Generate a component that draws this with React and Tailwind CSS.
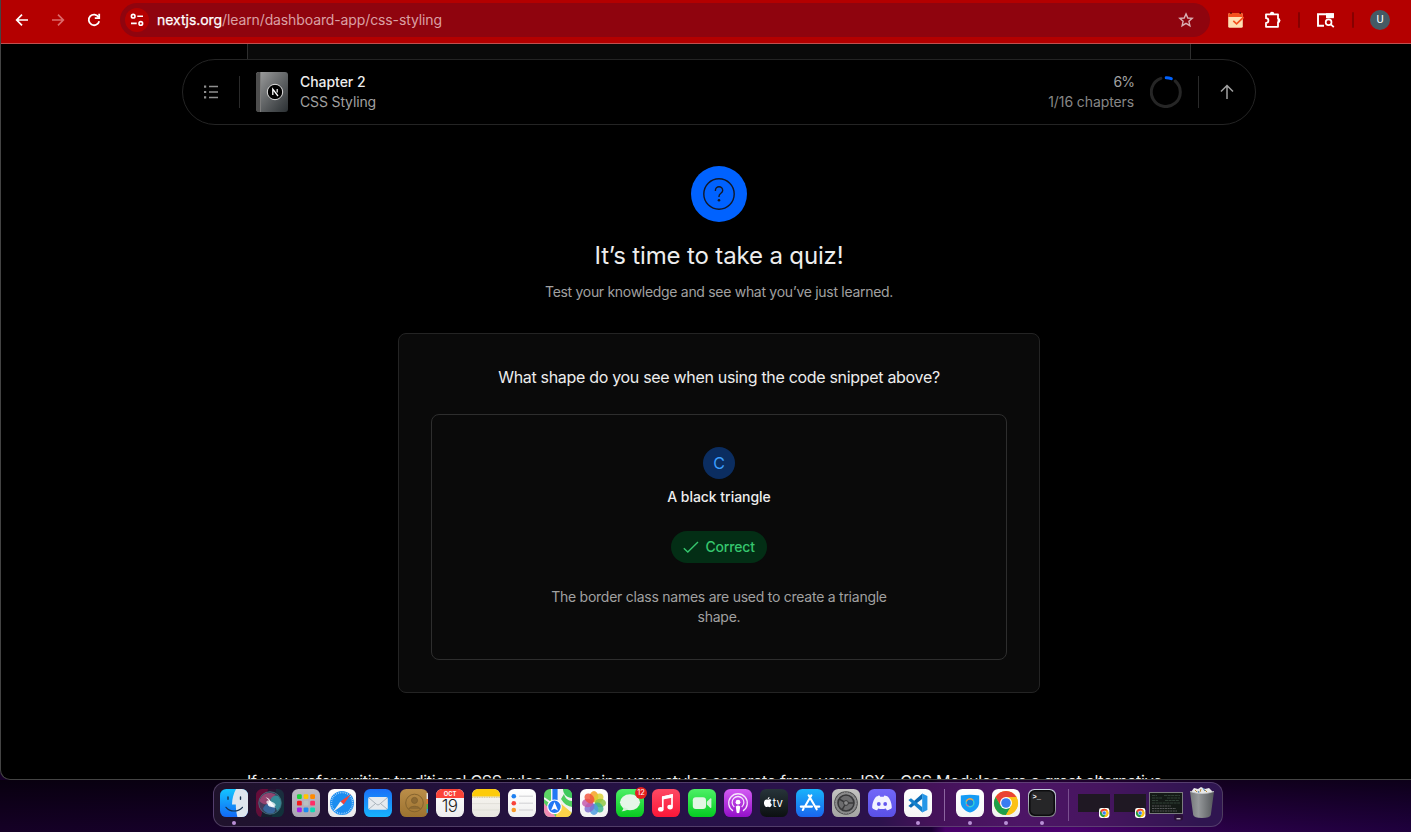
import React from "react";

/* ---------- Browser toolbar ---------- */

function ToolButton({ children, className = "" }) {
  return <button className={`flex h-8 w-9 items-center justify-center ${className}`}>{children}</button>;
}

function Toolbar() {
  return (
    <header className="flex h-[43px] shrink-0 items-start bg-[#b40000] pt-[3px] pl-[3px] text-white">
      <div className="flex h-[34px] items-center">
        <ToolButton>
          <svg width="14" height="14" viewBox="0 0 14 14" fill="none" stroke="currentColor" strokeWidth="1.7">
            <path d="M13 7H2M7 1.7L1.7 7L7 12.3" />
          </svg>
        </ToolButton>
        <ToolButton className="text-[#dc6a6a]">
          <svg width="14" height="14" viewBox="0 0 14 14" fill="none" stroke="currentColor" strokeWidth="1.7">
            <path d="M1 7H12M7 1.7L12.3 7L7 12.3" />
          </svg>
        </ToolButton>
        <ToolButton>
          <svg width="14" height="14" viewBox="0 0 14 14" fill="none" stroke="currentColor" strokeWidth="1.8">
            <path d="M11.6 4.2A5.3 5.3 0 1 0 12.2 8.2" />
            <path d="M12.2 0.8V5.2H7.8" />
          </svg>
        </ToolButton>
      </div>

      <div className="ml-[8px] flex h-[34px] w-[1090px] items-center rounded-full bg-[#8f040e] pr-[16px] pl-[5px]">
        <span className="flex size-6 items-center justify-center rounded-full bg-[#b40000]">
          <svg width="14" height="14" viewBox="0 0 14 14" fill="none" stroke="currentColor" strokeWidth="1.6">
            <circle cx="3.2" cy="3.2" r="1.8" />
            <path d="M7.3 3.2H13M1 10.4H6.7" />
            <circle cx="10.8" cy="10.4" r="1.8" />
          </svg>
        </span>
        <span className="ml-[8px] font-[Inter,sans-serif] text-[14px] leading-5 tracking-[-0.12px] whitespace-nowrap text-[#dba0a4]">
          <span className="tracking-[-0.05px] text-white [-webkit-text-stroke:0.25px_white]">nextjs.org</span>
          <span>/learn/dashboard-app/css-styling</span>
        </span>
        <svg className="ml-auto" width="16" height="16" viewBox="0 0 16 16" fill="none" stroke="#d9b0b4" strokeWidth="1.4">
          <path d="M8 1.9L9.8 6L14.2 6.4L10.9 9.3L11.9 13.7L8 11.4L4.1 13.7L5.1 9.3L1.8 6.4L6.2 6Z" />
        </svg>
      </div>

      <div className="ml-[18px] flex h-[34px] items-center">
        <svg width="16" height="16" viewBox="0 0 16 16">
          <rect x="0.2" y="1" width="14.6" height="14.8" rx="1.5" fill="#ffe0b2" />
          <path d="M0.2 5V2.5A1.5 1.5 0 0 1 1.7 1H13.3A1.5 1.5 0 0 1 14.8 2.5V5Z" fill="#f4511e" />
          <path d="M3 0V2M12.2 0V2" stroke="#4a0a00" strokeWidth="1.2" />
          <path d="M5.3 8.8L8.6 11.8L15.6 5.2" fill="none" stroke="#f4511e" strokeWidth="1.6" />
        </svg>
        <svg className="ml-[20px]" width="18" height="18" viewBox="0 0 18 18" fill="none" stroke="white" strokeWidth="1.8" strokeLinejoin="round">
          <path d="M2 3.3H14V7.5A2 2 0 0 1 14 11.3V15.8H2V12A2.2 2.2 0 0 0 2 7.2Z" />
          <path d="M6.5 3A1.6 1.6 0 0 1 9.7 3Z M14.2 7.8A1.6 1.6 0 0 1 14.2 11Z" fill="white" strokeWidth="1.2" />
        </svg>
        <span className="ml-[16px] h-4 w-[2px] rounded bg-[#870000]" />
        <svg className="ml-[16px]" width="19" height="16" viewBox="0 0 19 16" fill="none" stroke="white" strokeWidth="1.9">
          <path d="M8 13.7H2V2.2H17V5.5" />
          <path d="M10 1.3H17.8V6.2H10Z" fill="white" stroke="none" />
          <circle cx="12.6" cy="10.3" r="2.9" strokeWidth="1.7" />
          <path d="M14.8 12.3L17.8 15.2" strokeWidth="1.7" />
        </svg>
        <span className="ml-[17px] h-4 w-[2px] rounded bg-[#870000]" />
        <span className="ml-[16px] flex size-5 items-center justify-center rounded-full bg-[#455a64] font-[Roboto,sans-serif] text-[11px] text-white">U</span>
      </div>
    </header>
  );
}

/* ---------- Chapter bar ---------- */

function ChapterBook() {
  return (
    <span className="flex h-10 w-8 overflow-hidden rounded-[3px] bg-gradient-to-br from-[#a3a3a3] to-[#2b3033]">
      <span className="w-[5px] border-r border-[#7d7d7d] bg-[#4d4d4d]" />
      <span className="flex flex-1 items-center justify-center">
        <svg width="18" height="18" viewBox="0 0 18 18" fill="none">
          <circle cx="9" cy="9" r="7.7" fill="black" stroke="#e0e0e0" strokeWidth="1" />
          <path d="M6.8 12V6.2L12 13" stroke="white" strokeWidth="1.3" />
          <path d="M11.2 6V9.6" stroke="white" strokeWidth="1.2" />
        </svg>
      </span>
    </span>
  );
}

function ChapterBar() {
  return (
    <nav className="ml-[181px] flex h-[66px] w-[1074px] items-center rounded-full border border-[#242424] bg-black font-[Inter,sans-serif] text-[14px] leading-5">
      <svg className="ml-[20px]" width="16" height="16" viewBox="0 0 16 16" fill="none" stroke="#8f8f8f" strokeWidth="1.5">
        <path d="M6 2.6H15M6 8H15M6 13.4H15" />
        <path d="M1 2.6H3.2M1 8H3.2M1 13.4H3.2" strokeWidth="2.2" />
      </svg>
      <span className="ml-[20px] h-8 w-px bg-[#2a2a2a]" />
      <span className="ml-[16px]"><ChapterBook /></span>
      <span className="ml-[12px] flex flex-col">
        <span className="font-medium tracking-[-0.05px] text-[#ededed]">Chapter 2</span>
        <span className="tracking-[-0.14px] text-[#a1a1a1]">CSS Styling</span>
      </span>
      <span className="ml-auto flex flex-col items-end">
        <span className="tracking-[-1px] text-[#a1a1a1]">6%</span>
        <span className="tracking-[-0.1px] text-[#878787]">1/16 chapters</span>
      </span>
      <svg className="ml-[16px]" width="32" height="32" viewBox="0 0 32 32" fill="none" strokeWidth="3" strokeLinecap="round">
        <path d="M25.2 5A14.5 14.5 0 1 1 10.9 2.4" stroke="#262626" />
        <path d="M16.2 1.7A14.5 14.5 0 0 1 21.3 2.7" stroke="#0062ff" />
      </svg>
      <span className="ml-[16px] h-8 w-px bg-[#2a2a2a]" />
      <svg className="mr-[20px] ml-[20px]" width="16" height="16" viewBox="0 0 16 16" fill="none" stroke="#a1a1a1" strokeWidth="1.5">
        <path d="M8 15V2M2 7.5L8 1.5L14 7.5" />
      </svg>
    </nav>
  );
}

/* ---------- Quiz ---------- */

function Quiz() {
  return (
    <section className="mt-[41px] flex flex-col items-center pr-px pl-[27px] font-[Inter,sans-serif]">
      <span className="flex size-14 items-center justify-center rounded-full bg-[#0062ff]">
        <svg width="32" height="32" viewBox="0 0 32 32" fill="none" stroke="#111827" strokeWidth="1.4">
          <circle cx="16" cy="16" r="15.2" />
          <path d="M12.4 13V12.4A3.6 3.6 0 0 1 19.7 12.4C19.7 15.2 16 15.2 16 18.2V19" />
          <circle cx="16" cy="22.2" r="1.3" fill="#111827" stroke="none" />
        </svg>
      </span>
      <h2 className="mt-[18px] text-[24px] leading-8 tracking-[-0.145px] text-[#ededed]">It’s time to take a quiz!</h2>
      <p className="mt-[10px] text-[14px] leading-5 tracking-[-0.3px] text-[#a1a1a1]">
        Test your knowledge and see what you’ve just learned.
      </p>

      <div className="mt-[31px] flex h-[360px] w-[642px] flex-col items-center rounded-[8px] border border-[#242424] bg-[#0a0a0a]">
        <h3 className="mt-[31px] text-[16px] leading-6 tracking-[-0.314px] text-[#ededed]">
          What shape do you see when using the code snippet above?
        </h3>
        <div className="mt-[25px] flex h-[246px] w-[576px] flex-col items-center rounded-[8px] border border-[#2e2e2e]">
          <span className="mt-[32px] flex size-8 items-center justify-center rounded-full bg-[#0b2d60] pb-px text-[16px] leading-6 text-[#3b9eff]">
            C
          </span>
          <p className="mt-[8px] text-[14px] leading-5 font-medium tracking-[-0.03px] text-[#ededed]">A black triangle</p>
          <span className="mt-[24px] flex h-8 w-[96px] items-center rounded-full bg-[#032e15] pl-[12px] text-[14px] leading-5 font-medium text-[#36c66e]">
            <svg width="16" height="16" viewBox="0 0 16 16" fill="none" stroke="currentColor" strokeWidth="1.4">
              <path d="M0.8 9.3L4.8 13L15 3" />
            </svg>
            <span className="ml-[6.5px] tracking-[-0.18px]">Correct</span>
          </span>
          <p className="mt-[24px] flex flex-col items-center text-[14px] leading-5 tracking-[-0.25px] whitespace-nowrap text-[#a1a1a1]">
            <span>The border class names are used to create a triangle</span>
            <span>shape.</span>
          </p>
        </div>
      </div>
    </section>
  );
}

/* ---------- Dock ---------- */

function Tile({ id, from, to, children, dot, badge }) {
  return (
    <span className="relative flex w-7 flex-col items-center">
      <svg width="28" height="28" viewBox="0 0 28 28">
        <defs>
          <linearGradient id={id} x1="0" y1="0" x2="0" y2="1">
            <stop offset="0" stopColor={from} />
            <stop offset="1" stopColor={to} />
          </linearGradient>
          <clipPath id={id + "-clip"}><rect width="28" height="28" rx="6.3" /></clipPath>
        </defs>
        <g clipPath={`url(#${id}-clip)`}>
          <rect width="28" height="28" fill={`url(#${id})`} />
          {children}
        </g>
      </svg>
      {badge && (
        <span className="absolute -top-[2px] -right-[3px] flex size-3 items-center justify-center rounded-full bg-[#e5201f] font-[Inter,sans-serif] text-[7.5px] text-white">
          {badge}
        </span>
      )}
      <span className={dot ? "mt-[4px] size-1 rounded-full bg-[#b98fd6]" : "mt-[4px] size-1"} />
    </span>
  );
}

function ChromeLogo({ cx, cy, r }) {
  return (
    <g transform={`translate(${cx} ${cy}) scale(${r / 12})`}>
      <circle r="12" fill="#fbc116" />
      <path d="M-10.4 -6A12 12 0 0 1 10.4 -6L0 -6L-5.2 3Z" fill="#ea4335" />
      <path d="M-10.4 -6A12 12 0 0 0 0 12L5.2 3L-5.2 3Z" fill="#1e9e4a" />
      <path d="M10.4 -6A12 12 0 0 1 0 12L5.2 3L0 -6Z" fill="#fbc116" />
      <circle r="6" fill="white" />
      <circle r="4.8" fill="#3b7cf0" />
    </g>
  );
}

const launchpadColors = ["#1ed33c", "#ffc400", "#ff8a00", "#f51b1b", "#b9c0c0", "#ff2d66", "#a520e8", "#1b8cf2", "#12d9b2"];
const petals = ["#f79c1c", "#d9cf2f", "#8cc63f", "#3bb38a", "#4a9be0", "#7e6bd0", "#c355a8", "#f0523c"];

function MinimizedWindow() {
  return (
    <svg className="mt-[1px]" width="34" height="28" viewBox="0 0 34 28">
      <rect x="0" y="4" width="32" height="18" fill="#1f1823" />
      <rect x="21" y="18" width="10.4" height="10" rx="2.4" fill="white" />
      <ChromeLogo cx={26.2} cy={23} r={4.3} />
    </svg>
  );
}

function Dock() {
  return (
    <div className="ml-[213px] flex h-[45px] w-[1010px] items-start rounded-[12px] border border-[#6d5a80]/60 bg-[linear-gradient(90deg,#1f122c_0%,#22113a_20%,#28124a_50%,#2c124c_66%,#441259_71%,#4d1566_80%,#46155f_88%,#2f1550_98%)] pt-[6px] pl-[6px]">
      <div className="flex gap-[8px]">
        <Tile id="finder" from="#14c5ff" to="#1268f5" dot>
          <path d="M16 0C13.5 5 12.2 9 12 15.5H15.8C15.8 20 16.4 24 17.4 28H28V0Z" fill="#dfe6ee" />
          <path d="M8 8V10.3M20.5 8V10.3" stroke="#17324f" strokeWidth="1.4" strokeLinecap="round" />
          <path d="M6 18.3C10 23.2 18 23.2 22.5 18.3" stroke="#17324f" strokeWidth="1.2" fill="none" strokeLinecap="round" />
        </Tile>
        <Tile id="siri" from="#2a1434" to="#14202e">
          <path d="M0 0H12L5 28H0Z" fill="#7b0a3c" opacity=".75" />
          <path d="M20 0H28V28H16Z" fill="#0c4a4c" opacity=".45" />
          <circle cx="14" cy="14" r="11.3" fill="#3d4a66" opacity=".75" />
          <circle cx="14" cy="14" r="11.3" fill="none" stroke="#4e8d94" strokeWidth=".6" />
          <path d="M3.5 12C6 4 14 2 20 6C16 8 12 12 14 15C9 16 6 15 3.5 12Z" fill="#c2487c" opacity=".65" />
          <path d="M14 14C14 8 19 5 22 7C26 11 26 18 21 22C20 18 17 15 14 14Z" fill="#36a9b0" opacity=".7" />
          <path d="M7 20C8 16 12 14 15 14C20 17 20 21 18 23.5C14 26 9 24 7 20Z" fill="#3a7cc0" opacity=".65" />
          <path d="M9.5 8.5C13 8 14 12 19.5 18.5C15 18.5 10 17 12.5 14C14 12 12 10 9.5 8.5Z" fill="#fff" opacity=".9" />
          <ellipse cx="15" cy="14.5" rx="5" ry="2" fill="#fff" opacity=".75" transform="rotate(25 15 14.5)" />
        </Tile>
        <Tile id="launchpad" from="#bdbac4" to="#aaa7b2">
          {launchpadColors.map((c, i) => (
            <rect key={c} x={5 + (i % 3) * 6.6} y={5.2 + Math.floor(i / 3) * 6.6} width="4.8" height="4.8" rx="1.2" fill={c} />
          ))}
        </Tile>
        <Tile id="safari" from="#ffffff" to="#e8e8ea">
          <circle cx="14" cy="14" r="12" fill="#1c8df0" />
          <circle cx="14" cy="14" r="10.6" fill="none" stroke="#d8edff" strokeWidth="1.6" strokeDasharray=".6 1.3" />
          <path d="M23 5L15.6 15.6L12.4 12.4Z" fill="#f4443a" />
          <path d="M5 23L12.4 12.4L15.6 15.6Z" fill="#f2f2f2" />
        </Tile>
        <Tile id="mail" from="#1a70f8" to="#18b4fd">
          <rect x="4.2" y="8" width="19.6" height="12.8" rx="1.8" fill="#e6eaee" />
          <path d="M4.8 8.8L12.6 15.4Q14 16.6 15.4 15.4L23.2 8.8M5 20L11.4 14.6M23 20L16.6 14.6" stroke="#9aa6b0" strokeWidth=".8" fill="none" />
        </Tile>
        <Tile id="contacts" from="#bb8e49" to="#9c7230">
          <rect x="26.6" y="4" width="2" height="6" fill="#e8e8e8" />
          <rect x="26.6" y="10" width="2" height="5" fill="#e8742a" />
          <rect x="26.6" y="15" width="2" height="5" fill="#46b84a" />
          <rect x="26.6" y="20" width="2" height="4" fill="#2a9ae0" />
          <g fill="none" stroke="#80602d" strokeWidth=".9">
            <circle cx="14.5" cy="14" r="8.8" />
            <circle cx="14.5" cy="11.4" r="3" fill="#8e6a32" />
            <path d="M8.8 20C10 16.4 19 16.4 20.2 20" fill="#8e6a32" />
          </g>
        </Tile>
        <Tile id="calendar" from="#ffffff" to="#ededee">
          <rect width="28" height="9" fill="#fb4438" />
          <text x="14" y="7.2" textAnchor="middle" fontFamily="Inter" fontSize="5.8" fontWeight="700" fill="white">OCT</text>
          <text x="13.6" y="23.4" textAnchor="middle" fontFamily="Inter" fontSize="17" fontWeight="300" letterSpacing="-.5" fill="#222">19</text>
        </Tile>
        <Tile id="notes" from="#faf8f4" to="#e8e6e0">
          <rect width="28" height="7.5" fill="#fdcb0a" />
          <path d="M0 8.2H28" stroke="#bba65c" strokeWidth=".8" strokeDasharray="1 .7" />
          <path d="M0 14.6H28M0 21H28" stroke="#d3d1cb" strokeWidth=".5" />
        </Tile>
        <Tile id="reminders" from="#ffffff" to="#efefef">
          <circle cx="5.8" cy="7.2" r="2.3" fill="#1e80f0" />
          <circle cx="5.8" cy="14.2" r="2.3" fill="#f8423a" />
          <circle cx="5.8" cy="21" r="2.3" fill="#f7982a" />
          <path d="M11 7.2H25M11 14.2H25M11 21H25" stroke="#cfcfd2" strokeWidth="1" />
        </Tile>
        <Tile id="maps" from="#60d566" to="#4fce5f">
          <path d="M7 0H9V14H7ZM13 0H15V14H13Z" fill="#f4f4f4" />
          <path d="M8.4 0H13.6V14H8.4Z" fill="#2278f4" />
          <path d="M15 0H19L28 8V24L14 14Z" fill="#f2f2f2" />
          <path d="M19 0H28V9C23 9 19 5 19 0Z" fill="#3ec95c" />
          <path d="M17 10C21 16 24 17 28 18V12C24 12 21 9 20 5Z" fill="#4fce5f" />
          <path d="M0 14L12 28H0Z" fill="#f08ab4" />
          <path d="M14 12L28 24V28H12Z" fill="#fbd24a" />
          <path d="M0 9L7 14" stroke="#f5f5f5" strokeWidth="2" />
          <circle cx="10.5" cy="17.8" r="6.8" fill="#2278f4" stroke="white" strokeWidth="1.2" />
          <path d="M10.5 13L14 21.6L10.5 19.8L7 21.6Z" fill="white" />
        </Tile>
        <Tile id="photos" from="#ffffff" to="#f2f2f2">
          {petals.map((c, i) => (
            <ellipse key={c} cx="14" cy="7.6" rx="4.3" ry="5.6" fill={c} opacity=".82" transform={`rotate(${i * 45} 14 14)`} />
          ))}
        </Tile>
        <Tile id="messages" from="#4df066" to="#08c920" badge="12">
          <ellipse cx="14" cy="13.3" rx="10" ry="8" fill="#e6f6e8" />
          <path d="M7.5 18C7.6 20.4 6.4 21.6 5.4 22.2C8.5 22.4 10.6 21.4 12 20Z" fill="#d5efd8" />
        </Tile>
        <Tile id="music" from="#fd4a64" to="#fb1638">
          <path d="M10.8 19.6V8.2L20 6.1V17.4" stroke="white" strokeWidth="1.7" fill="none" />
          <path d="M9.95 7.4L20.85 5V8.4L9.95 10.8Z" fill="white" />
          <ellipse cx="8.8" cy="20.3" rx="2.8" ry="2.3" fill="white" />
          <ellipse cx="18.1" cy="18.1" rx="2.8" ry="2.3" fill="white" />
        </Tile>
        <Tile id="facetime" from="#4df066" to="#05cb22">
          <rect x="4.8" y="8.2" width="13.2" height="11.8" rx="3" fill="#e2f6e4" />
          <path d="M18.8 12.8L22.2 9.4Q23.4 8.8 23.4 10.2V18Q23.4 19.4 22.2 18.8L18.8 15.4Z" fill="#d2f2d6" />
        </Tile>
        <Tile id="podcasts" from="#d45cf4" to="#9310c8">
          <g fill="none" stroke="#f6e4fc" strokeWidth="1.3">
            <path d="M9 21.9A9.3 9.3 0 1 1 19 21.9" />
            <path d="M10.3 18A5.9 5.9 0 1 1 17.7 18" />
          </g>
          <circle cx="14" cy="13.2" r="2.4" fill="white" />
          <path d="M11.8 17.6Q14 15.4 16.2 17.6L15.4 23.6Q14 25 12.6 23.6Z" fill="white" />
        </Tile>
        <Tile id="tv" from="#27343a" to="#0c1011">
          <path d="M7.8 10.8C9 9.8 11 10.2 11.5 11.3C9.8 12.5 10.2 14.7 11.9 15.4C11.2 17.4 10 18.6 8.9 18C8.1 17.6 7.6 17.7 6.9 18C5.2 18.5 3.8 15.5 4 13.5C4.2 10.9 6 10 7.8 10.8ZM7.7 10.3C7.6 9 8.4 8.2 9.5 8C9.6 9.2 8.8 10.2 7.7 10.3Z" fill="white" />
          <text x="12.6" y="17.8" fontFamily="Inter" fontSize="11.3" fontWeight="400" fill="white">tv</text>
        </Tile>
        <Tile id="appstore" from="#19b3fb" to="#1a66ee">
          <path d="M15.4 6.3L8.8 17.7M12.6 6.3L20.7 20.3M4.8 17.6H16M19.6 17.6H23.3M7.6 19.6L6.8 21" stroke="white" strokeWidth="2.1" fill="none" strokeLinecap="round" />
        </Tile>
        <Tile id="settings" from="#c4c4c2" to="#a4a4a2">
          <circle cx="14" cy="14" r="11.8" fill="#4a4a4c" />
          <circle cx="14" cy="14" r="10.6" fill="#8a8a8b" stroke="#a4a4a4" strokeWidth=".8" strokeDasharray=".9 .8" />
          <circle cx="14" cy="14" r="8" fill="#6c6c6e" stroke="#38383a" strokeWidth="1.6" />
          <path d="M14 14L7.4 10.2M14 14L21.6 14M14 14L10.2 20.6" stroke="#38383a" strokeWidth="1.5" />
          <circle cx="14" cy="14" r="2.4" fill="#8a8a8b" stroke="#38383a" />
        </Tile>
        <Tile id="discord" from="#7267f8" to="#5a50e6">
          <path d="M9.4 7.2C10.6 6.8 11.6 6.6 11.6 6.6L12.3 7.8Q14 7.5 15.7 7.8L16.4 6.6C16.4 6.6 18 6.8 19.6 7.6C21.6 9 23.8 14 23.8 18.8C22.6 20.6 19.2 21.4 19 21.4L17.8 19.6Q14 20.6 10.2 19.6L9 21.4C8.8 21.4 5.4 20.6 4.2 18.8C4.2 14 6.4 9 8.4 7.6Z" fill="#f2f2ff" />
          <ellipse cx="10.8" cy="15" rx="1.9" ry="2.1" fill="#6257ee" />
          <ellipse cx="17.2" cy="15" rx="1.9" ry="2.1" fill="#6257ee" />
        </Tile>
        <Tile id="vscode" from="#ffffff" to="#f5f5f5" dot>
          <path d="M18.4 4.6V9.8L7 18.8L4.4 16.9Z" fill="#0a6ab4" />
          <path d="M18.4 23.4V18.2L7 9.2L4.4 11.1Z" fill="#1380cc" />
          <path d="M18.2 4.6L23.4 7V21L18.2 23.4Z" fill="#2596e8" />
        </Tile>
      </div>

      <span className="ml-[12px] h-8 w-px bg-[#8c66a0]" />

      <div className="ml-[11px] flex gap-[8px]">
        <Tile id="shield" from="#ffffff" to="#f6f6f6" dot>
          <path d="M4.8 6.4Q14 5.2 23.2 6.4V14C22.6 19 19 22 14 23.6C9 22 5.4 19 4.8 14Z" fill="#159bf5" />
          <circle cx="14" cy="13.8" r="3.9" fill="#1483dc" stroke="#37d3d5" strokeWidth="1.4" />
          <path d="M10.2 12.4A4 4 0 0 1 17 11.2" fill="none" stroke="#f59a4a" strokeWidth="1.4" />
          <path d="M10.4 15A4 4 0 0 0 12.6 17.3" fill="none" stroke="#e8608a" strokeWidth="1.2" />
        </Tile>
        <Tile id="chrome" from="#ffffff" to="#f0f0f0" dot>
          <ChromeLogo cx={14} cy={14} r={12} />
        </Tile>
        <Tile id="terminal" from="#c9d3df" to="#77777d" dot>
          <rect x="1" y="1" width="26" height="26" rx="5.6" fill="#0c0c0e" />
          <rect x="2.6" y="2.6" width="22.8" height="22.8" rx="4.4" fill="#262628" />
          <text x="4.6" y="10.2" fontFamily="Liberation Mono" fontSize="7" fontWeight="700" fill="white">&gt;_</text>
        </Tile>
      </div>

      <span className="ml-[12px] h-8 w-px bg-[#7a4f90]" />

      <div className="ml-[9px] flex">
        <MinimizedWindow />
        <span className="ml-[2px]"><MinimizedWindow /></span>
        <svg className="ml-[1px]" width="34" height="32" viewBox="0 0 34 32">
          <rect x=".5" y="3.5" width="33" height="21" fill="#141a16" stroke="#7b7b7f" />
          <path d="M3 6.5H8M15 6.5H31M3 9H13M18 9H31M3 11.5H9M16 11.5H30M3 14H31" stroke="#34453a" strokeWidth=".9" strokeDasharray="3 .6" />
          <path d="M3 17H22M3 19.5H27M3 22H28" stroke="#67676b" strokeWidth=".8" strokeDasharray="2 .6" />
          <rect x="25" y="25" width="9" height="6.5" rx="2.5" fill="#2a1038" />
          <path d="M27.5 29.8H31.5" stroke="#e8e8e8" />
        </svg>
        <svg className="-mt-[3px] ml-[6px]" width="26" height="34" viewBox="0 0 26 34">
          <defs>
            <linearGradient id="bin" x1="0" x2="1">
              <stop offset="0" stopColor="#75787a" />
              <stop offset=".35" stopColor="#95989a" />
              <stop offset="1" stopColor="#54575a" />
            </linearGradient>
          </defs>
          <path d="M2 6L5 2L9 3L12 1L16 3L20 2L24 6L22 9H4Z" fill="#e9e9e9" />
          <path d="M6 4L8 6M12 3L11 6M16 4L18 6" stroke="#b98b3c" strokeWidth="1" />
          <path d="M14 2L16 5M9 5L10 7" stroke="#427fb0" strokeWidth="1" />
          <path d="M1 5.5Q13 9.5 25 5.5L21.8 29Q21 32 13 32Q5 32 4.2 29Z" fill="url(#bin)" />
          <path d="M1 5.5Q13 9.5 25 5.5" fill="none" stroke="#c8cacc" strokeWidth=".9" />
        </svg>
      </div>
    </div>
  );
}

export default function App() {
  return (
    <div className="flex h-[832px] w-[1411px] flex-col overflow-hidden bg-[linear-gradient(90deg,#150026_0%,#16002c_30%,#1a0034_66%,#4a006c_67%,#4c0070_76%,#2a0048_87%,#1f003e_100%)]">
      <div className="flex h-[780px] shrink-0 flex-col overflow-hidden rounded-bl-[10px] border-b border-l border-[#444] bg-black">
        <Toolbar />
        <div className="h-px shrink-0 bg-[#c05050]" />
        <main className="flex flex-col">
          <div className="ml-[246px] h-[15px] w-[944px] border-x border-[#2e2e2e] bg-[#0a0a0a]" />
          <ChapterBar />
          <Quiz />
          <p className="mt-[76px] pl-[246px] font-[Inter,sans-serif] text-[16px] leading-6 tracking-[-0.272px] whitespace-nowrap text-[#ededed]">
            If you prefer writing traditional CSS rules or keeping your styles separate from your JSX - CSS Modules are a great alternative.
          </p>
        </main>
      </div>
      <div className="h-[52px] shrink-0 bg-gradient-to-b from-black/60 to-transparent pt-[2px]">
        <Dock />
      </div>
    </div>
  );
}
